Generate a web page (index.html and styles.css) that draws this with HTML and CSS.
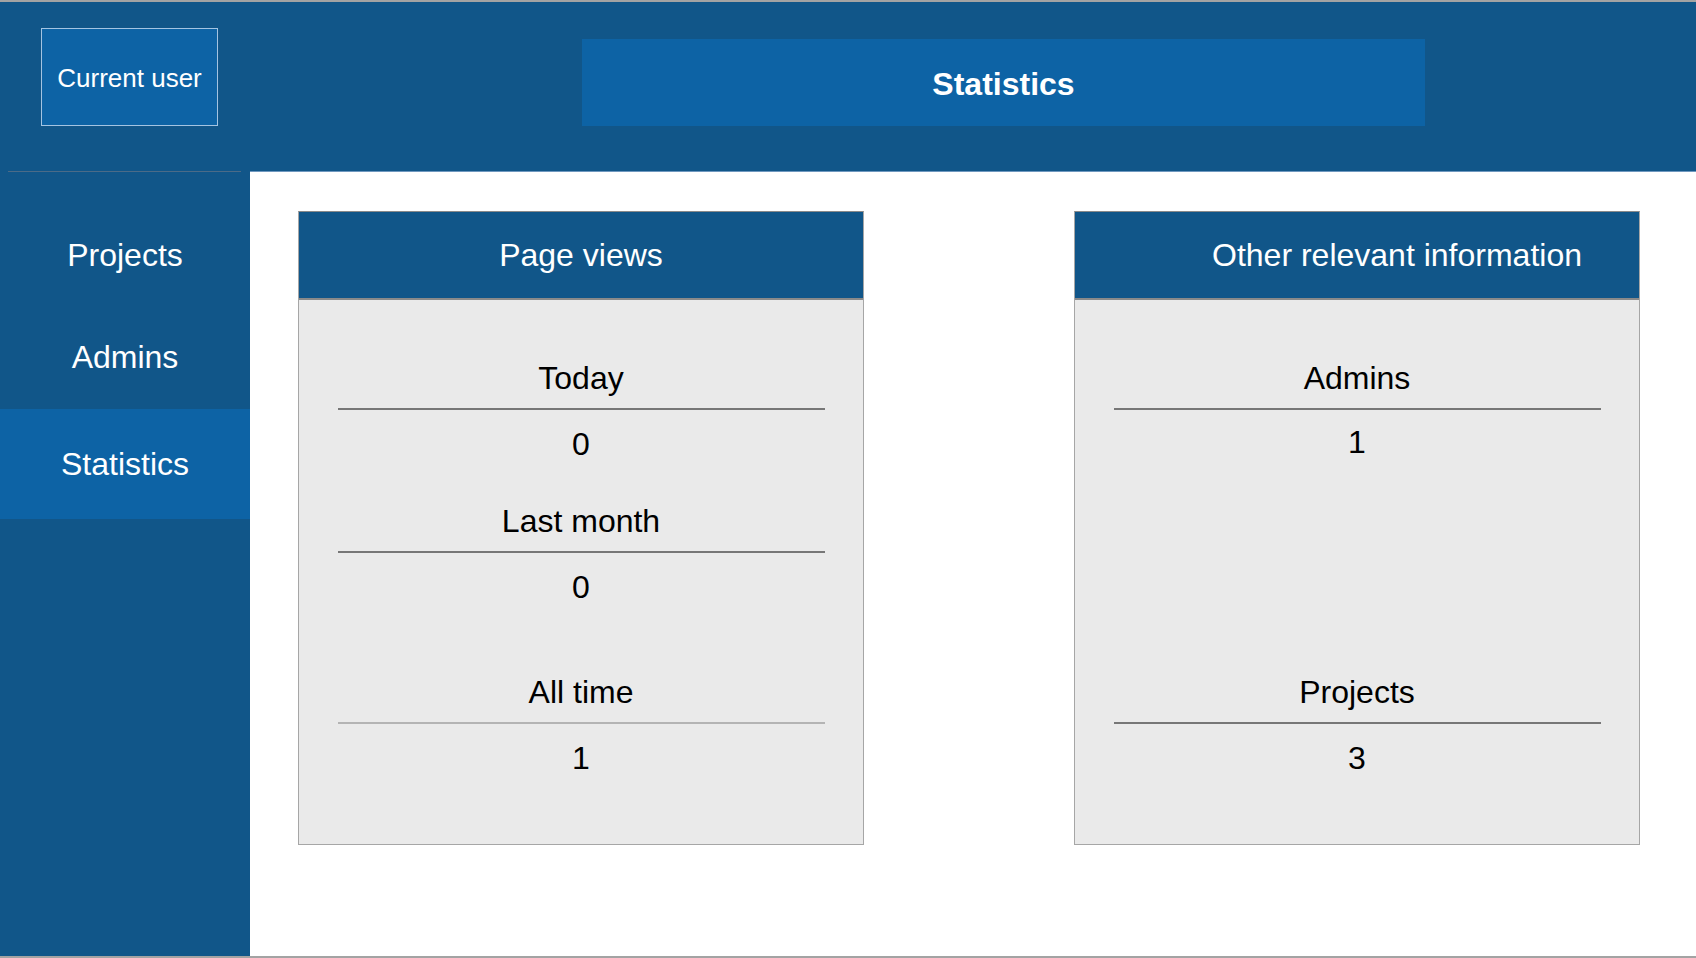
FILE: index.html
```html
<!DOCTYPE html>
<html lang="en">
<head>
<meta charset="utf-8">
<title>Statistics</title>
<link rel="stylesheet" href="styles.css">
</head>
<body>
<div class="page">
  <header class="topbar">
    <div class="user-box">Current user</div>
    <div class="title-bar">Statistics</div>
  </header>
  <div class="layout">
    <nav class="sidebar">
      <div class="side-rule"></div>
      <a class="nav-item first" href="#">Projects</a>
      <a class="nav-item" href="#">Admins</a>
      <a class="nav-item active" href="#">Statistics</a>
    </nav>
    <main class="content">
      <section class="card">
        <div class="card-head">Page views</div>
        <div class="card-body">
          <div class="stat">
            <div class="stat-label">Today</div>
            <div class="stat-rule"></div>
            <div class="stat-value">0</div>
          </div>
          <div class="stat">
            <div class="stat-label">Last month</div>
            <div class="stat-rule"></div>
            <div class="stat-value">0</div>
          </div>
          <div class="stat gap-lg">
            <div class="stat-label">All time</div>
            <div class="stat-rule light"></div>
            <div class="stat-value">1</div>
          </div>
        </div>
      </section>
      <section class="card">
        <div class="card-head offset">Other relevant information</div>
        <div class="card-body">
          <div class="stat">
            <div class="stat-label">Admins</div>
            <div class="stat-rule"></div>
            <div class="stat-value tight">1</div>
          </div>
          <div class="stat gap-xl">
            <div class="stat-label">Projects</div>
            <div class="stat-rule"></div>
            <div class="stat-value">3</div>
          </div>
        </div>
      </section>
    </main>
  </div>
</div>
</body>
</html>
```
FILE: styles.css
```css
html, body {
  margin: 0;
  padding: 0;
  background: #ffffff;
}

body {
  font-family: "Liberation Sans", Arial, Helvetica, sans-serif;
}

.page {
  height: 958px;
  box-sizing: border-box;
  border-top: 2px solid #a3a3a3;
  border-bottom: 2px solid #a3a3a3;
  display: flex;
  flex-direction: column;
}

.topbar {
  height: 169px;
  box-sizing: border-box;
  background: #115689;
  display: flex;
  align-items: flex-end;
  padding-bottom: 45px;
  flex-shrink: 0;
}

.user-box {
  margin-left: 41px;
  width: 177px;
  height: 98px;
  box-sizing: border-box;
  border: 1px solid #a4c4e2;
  background: #0d63a5;
  color: #ffffff;
  font-size: 26px;
  display: flex;
  align-items: center;
  justify-content: center;
  padding-top: 3px;
}

.title-bar {
  margin-left: 364px;
  width: 843px;
  height: 87px;
  box-sizing: border-box;
  background: #0d63a5;
  color: #ffffff;
  font-weight: bold;
  font-size: 32px;
  display: flex;
  align-items: center;
  justify-content: center;
  padding-top: 3px;
}

.layout {
  flex: 1;
  display: flex;
  min-height: 0;
}

.sidebar {
  width: 250px;
  flex-shrink: 0;
  background: #115689;
  display: flex;
  flex-direction: column;
}

.side-rule {
  height: 1px;
  margin: 0 9px 29px 8px;
  background: #4b6b88;
}

.nav-item {
  height: 104px;
  display: flex;
  align-items: center;
  justify-content: center;
  color: #ffffff;
  font-size: 32px;
  text-decoration: none;
}

.nav-item.first {
  padding-top: 4px;
  height: 100px;
}

.nav-item.active {
  height: 110px;
  background: #0d63a5;
}

.content {
  flex: 1;
  border-top: 1px solid #6f98bf;
  padding: 39px 56px 0 48px;
  display: flex;
  justify-content: space-between;
  align-items: flex-start;
}

.card {
  width: 566px;
  box-sizing: border-box;
  border: 1px solid #a6a6a6;
  border-top-color: #8a8a8a;
  background: #eaeaea;
}

.card-head {
  height: 86px;
  background: #115689;
  border-bottom: 2px solid #8a8a8a;
  color: #ffffff;
  font-size: 32px;
  display: flex;
  align-items: center;
  justify-content: center;
}

.card-head.offset {
  padding-left: 80px;
}

.card-body {
  padding: 58px 0 66px;
}

.stat-label,
.stat-value {
  font-size: 32px;
  line-height: 40px;
  text-align: center;
  color: #000000;
}

.stat-value.tight {
  margin-top: -2px;
}

.stat-rule {
  height: 2px;
  background: #777777;
  margin: 10px 38px 14px 39px;
}

.stat-rule.light {
  background: #b4b4b4;
}

.stat + .stat {
  margin-top: 37px;
}

.stat.gap-lg {
  margin-top: 65px;
}

.stat.gap-xl {
  margin-top: 210px;
}
```
